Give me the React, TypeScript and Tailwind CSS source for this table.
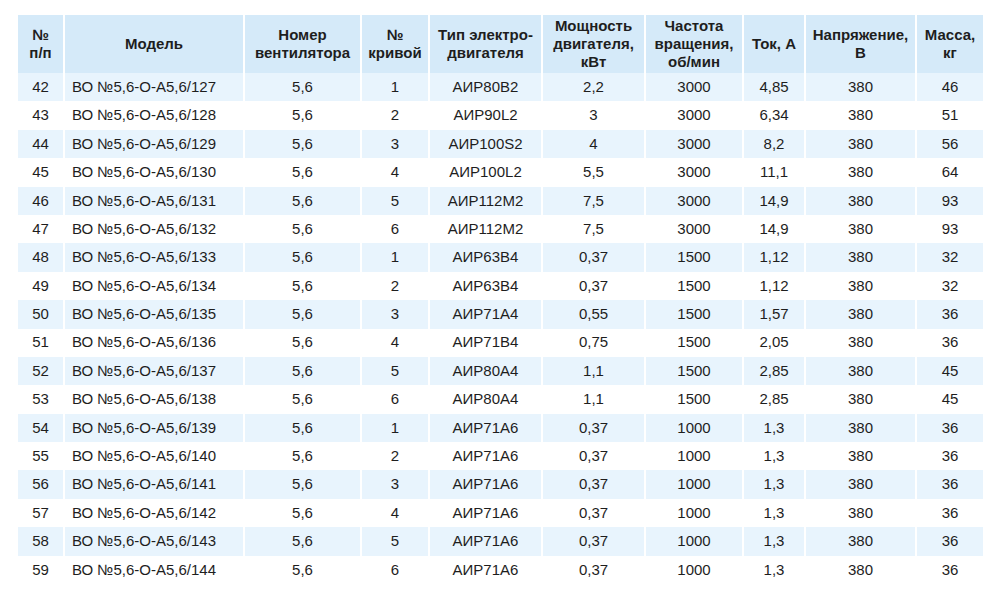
const headers: string[][] = [
  ["№", "п/п"],
  ["Модель"],
  ["Номер", "вентилятора"],
  ["№", "кривой"],
  ["Тип электро-", "двигателя"],
  ["Мощность", "двигателя,", "кВт"],
  ["Частота", "вращения,", "об/мин"],
  ["Ток, А"],
  ["Напряжение,", "В"],
  ["Масса,", "кг"],
];

// [№, curve, motor, power, rpm, current, mass]
const rows: [number, number, string, string, string, string, string][] = [
  [42, 1, "АИР80В2", "2,2", "3000", "4,85", "46"],
  [43, 2, "АИР90L2", "3", "3000", "6,34", "51"],
  [44, 3, "АИР100S2", "4", "3000", "8,2", "56"],
  [45, 4, "АИР100L2", "5,5", "3000", "11,1", "64"],
  [46, 5, "АИР112М2", "7,5", "3000", "14,9", "93"],
  [47, 6, "АИР112М2", "7,5", "3000", "14,9", "93"],
  [48, 1, "АИР63В4", "0,37", "1500", "1,12", "32"],
  [49, 2, "АИР63В4", "0,37", "1500", "1,12", "32"],
  [50, 3, "АИР71А4", "0,55", "1500", "1,57", "36"],
  [51, 4, "АИР71В4", "0,75", "1500", "2,05", "36"],
  [52, 5, "АИР80А4", "1,1", "1500", "2,85", "45"],
  [53, 6, "АИР80А4", "1,1", "1500", "2,85", "45"],
  [54, 1, "АИР71А6", "0,37", "1000", "1,3", "36"],
  [55, 2, "АИР71А6", "0,37", "1000", "1,3", "36"],
  [56, 3, "АИР71А6", "0,37", "1000", "1,3", "36"],
  [57, 4, "АИР71А6", "0,37", "1000", "1,3", "36"],
  [58, 5, "АИР71А6", "0,37", "1000", "1,3", "36"],
  [59, 6, "АИР71А6", "0,37", "1000", "1,3", "36"],
];

const gridCols =
  "grid grid-cols-[45px_178px_115px_66px_111px_101px_96px_60px_109px_66px] gap-x-[2px]";

const App: React.FC = () => {
  return (
    <div
      className="w-[1000px] h-[595px] bg-white pt-[15px] pl-[18px] text-[#1e1e1e] overflow-hidden"
      style={{ fontFamily: '"Liberation Sans", Arial, sans-serif' }}
    >
      <div className="w-[965px]">
        <div className={gridCols + " h-[58px]"}>
          {headers.map((lines, i) => (
            <div
              key={i}
              className="bg-[#d5eaf9] flex flex-col items-center justify-center text-center font-bold text-[15px] leading-[18px]"
            >
              {lines.map((l, j) => (
                <span key={j}>{l}</span>
              ))}
            </div>
          ))}
        </div>
        {rows.map((r, i) => {
          const bg = i % 2 === 0 ? "bg-[#e8f4fd]" : "bg-white";
          const cells = [
            String(r[0]),
            `ВО №5,6-О-А5,6/${r[0] + 85}`,
            "5,6",
            String(r[1]),
            r[2],
            r[3],
            r[4],
            r[5],
            "380",
            r[6],
          ];
          return (
            <div key={r[0]} className={gridCols + " h-[28.4px] text-[15px]"}>
              {cells.map((c, j) => (
                <div
                  key={j}
                  className={
                    bg +
                    " flex items-center " +
                    (j === 1 ? "justify-start pl-[7px]" : "justify-center")
                  }
                >
                  {c}
                </div>
              ))}
            </div>
          );
        })}
      </div>
    </div>
  );
};

export default App;
